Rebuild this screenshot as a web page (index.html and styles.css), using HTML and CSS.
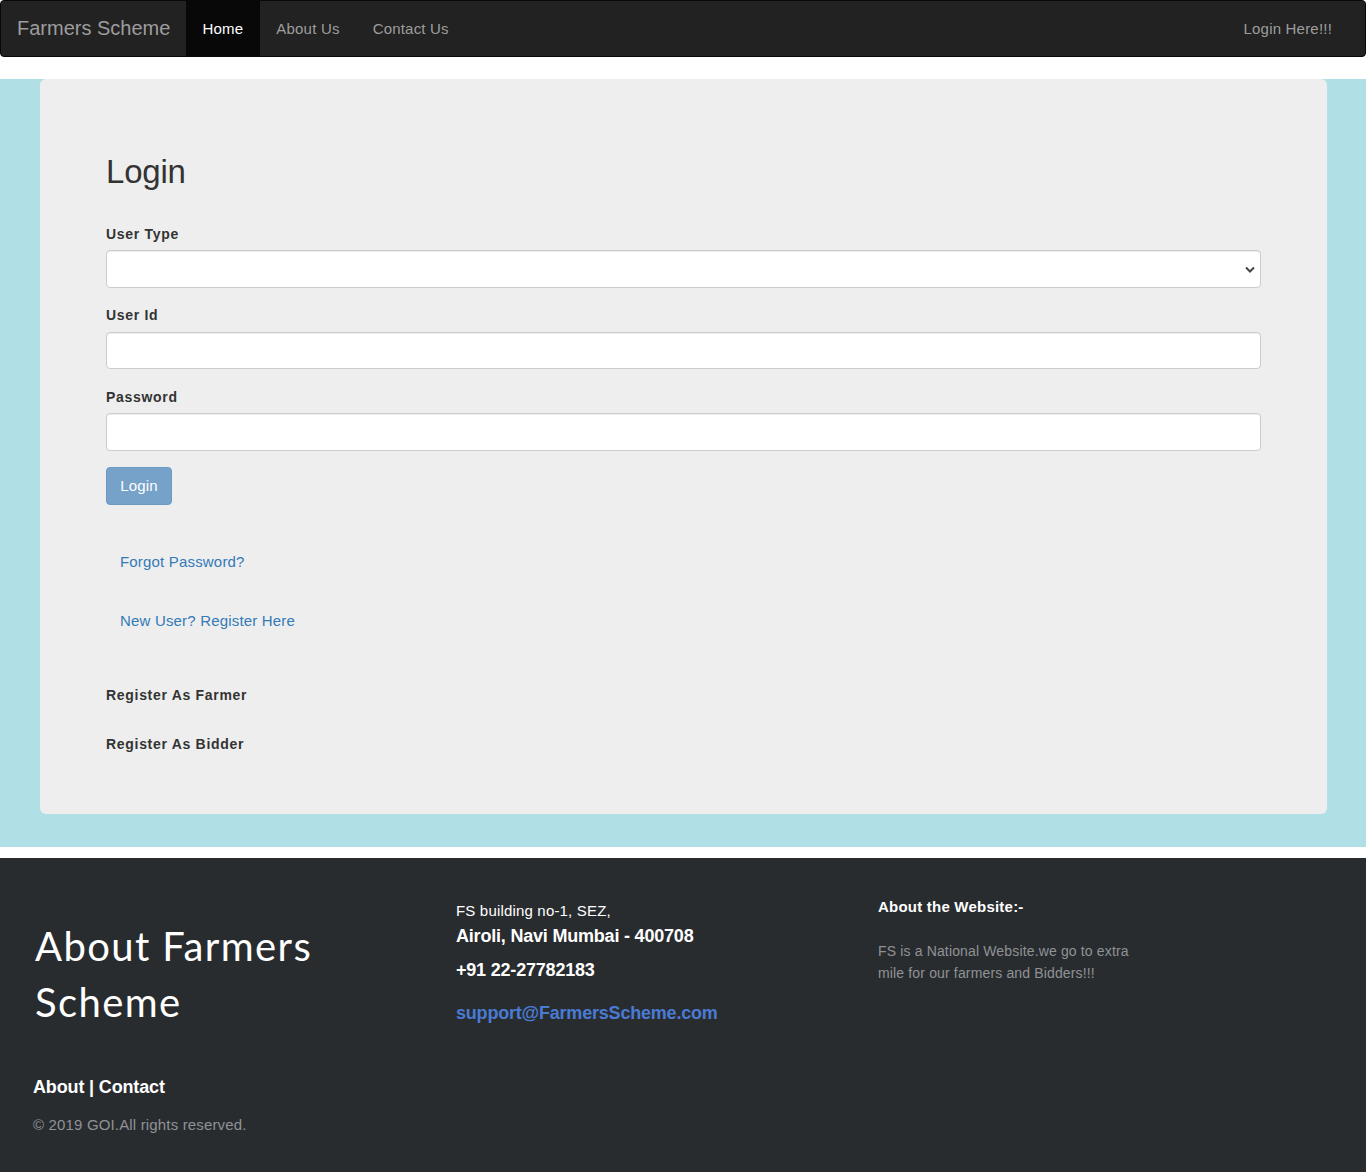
FILE: index.html
```html
<!DOCTYPE html>
<html lang="en">
<head>
<meta charset="utf-8">
<title>Farmers Scheme</title>
<link rel="stylesheet" href="styles.css">
</head>
<body>
<nav class="navbar">
  <a class="brand" href="#">Farmers Scheme</a>
  <ul class="nav">
    <li><a class="nav-link active" href="#">Home</a></li>
    <li><a class="nav-link" href="#">About Us</a></li>
    <li><a class="nav-link" href="#">Contact Us</a></li>
  </ul>
  <a class="nav-link login-link" href="#">Login Here!!!</a>
</nav>
<main class="band">
  <section class="card">
    <h2 class="title">Login</h2>
    <form class="form">
      <div class="group group-select">
        <label class="label">User Type</label>
        <div class="select-box">
          <svg class="chevron" width="10" height="7" viewBox="0 0 10 7"><path d="M1 1.5l4 4 4-4" fill="none" stroke="#444" stroke-width="2"/></svg>
        </div>
      </div>
      <div class="group">
        <label class="label label-mid">User Id</label>
        <input class="input" type="text">
      </div>
      <div class="group group-last">
        <label class="label">Password</label>
        <input class="input" type="password">
      </div>
      <button class="btn" type="button">Login</button>
    </form>
    <ul class="links">
      <li><a href="#">Forgot Password?</a></li>
      <li><a href="#">New User? Register Here</a></li>
    </ul>
    <div class="register">
      <p class="label">Register As Farmer</p>
      <p class="label">Register As Bidder</p>
    </div>
  </section>
</main>
<footer class="footer">
  <div class="col col-left">
    <h3 class="logo">About Farmers Scheme</h3>
    <p class="foot-links">About | Contact</p>
    <p class="copy">© 2019 GOI.All rights reserved.</p>
  </div>
  <div class="col col-mid">
    <p class="addr">FS building no-1, SEZ,</p>
    <p class="addr-strong">Airoli, Navi Mumbai - 400708</p>
    <p class="phone">+91 22-27782183</p>
    <p class="mail"><a href="#">support@FarmersScheme.com</a></p>
  </div>
  <div class="col col-right">
    <p class="about-head">About the Website:-</p>
    <p class="about-text">FS is a National Website.we go to extra mile for our farmers and Bidders!!!</p>
  </div>
</footer>
</body>
</html>
```
FILE: styles.css
```css
* { box-sizing: border-box; }
body {
  margin: 0;
  font-family: "Liberation Sans", Arial, sans-serif;
  font-size: 14px;
  line-height: 20px;
  color: #333;
  background: #fff;
}
a { text-decoration: none; }
ul { list-style: none; margin: 0; padding: 0; }
p { margin: 0; }

.navbar {
  display: flex;
  height: 57px;
  margin-bottom: 22px;
  background: #222;
  border: 1px solid #080808;
  border-radius: 4px;
}
.brand {
  padding: 0 16px;
  line-height: 55px;
  font-size: 20px;
  color: #9d9d9d;
  width: 185px;
  white-space: nowrap;
}
.nav { display: flex; }
.nav-link {
  display: block;
  padding: 0 16.5px;
  line-height: 55px;
  font-size: 15px;
  letter-spacing: .2px;
  color: #9d9d9d;
}
.nav-link.active { background: #080808; color: #fff; }
.login-link { margin-left: auto; padding-right: 17px; margin-right: 16px; }

.band {
  background: #b0e0e6;
  padding: 0 39px 33px 40px;
}
.card {
  height: 735px;
  padding: 73px 66px 0;
  background: #eee;
  border-radius: 6px;
}
.title {
  margin: 0 0 32px;
  font-size: 33px;
  line-height: 40px;
  letter-spacing: -.2px;
  font-weight: 400;
}
.label {
  display: block;
  margin: 0 0 6px;
  font-size: 14px;
  font-weight: 700;
  letter-spacing: .7px;
  line-height: 20px;
}
.label-mid { margin-bottom: 6.5px; }
.group { margin-bottom: 18px; }
.group-select { margin-bottom: 17px; }
.group-last { margin-bottom: 16.5px; }
.select-box, .input {
  display: block;
  width: 100%;
  height: 38px;
  background: #fff;
  border: 1px solid #ccc;
  border-radius: 4px;
  box-shadow: inset 0 1px 1px rgba(0,0,0,.075);
}
.select-box { display: flex; align-items: center; justify-content: flex-end; padding-right: 5px; }
.input { height: 37.5px; }
.btn {
  display: block;
  width: 66px;
  height: 38px;
  padding: 0 0 2px;
  font: 15px "Liberation Sans", Arial, sans-serif;
  letter-spacing: .2px;
  color: #fff;
  background: #76a2ca;
  border: 1px solid #6b9bc5;
  border-radius: 4px;
}
.links { margin-top: 37px; padding-left: 14px; }
.links li { height: 59px; line-height: 40px; font-size: 15px; letter-spacing: .18px; }
.links a { color: #337ab7; }
.register { margin-top: 25px; }
.register .label { margin-bottom: 29px; }

.footer {
  display: flex;
  height: 314px;
  margin-top: 11px;
  background: #292c2f;
  color: #fff;
}
.col-left { width: 423px; padding: 60px 0 0 33px; }
.col-mid { width: 422px; padding: 43px 0 0 33px; }
.col-right { width: 293px; padding: 39px 0 0 33px; }
.logo {
  margin: 0 0 44px 2px;
  font-family: "Comic Sans MS", Lato, sans-serif;
  font-size: 40px;
  letter-spacing: 1.4px;
  line-height: 56px;
  font-weight: 400;
  width: 340px;
}
.foot-links { font-size: 18px; font-weight: 700; line-height: 26px; letter-spacing: -.15px; }
.copy { margin-top: 15px; font-size: 15px; letter-spacing: .16px; color: #8f9296; }
.addr { font-size: 15px; line-height: 20px; letter-spacing: .18px; }
.addr-strong { margin-top: 2px; font-size: 18px; font-weight: 700; line-height: 26px; letter-spacing: -.2px; }
.phone { margin-top: 8px; font-size: 18px; font-weight: 700; line-height: 26px; letter-spacing: -.2px; }
.mail { margin-top: 17px; font-size: 18px; font-weight: 700; line-height: 26px; letter-spacing: -.2px; }
.mail a { color: #4a7bd4; }
.about-head { font-size: 15px; font-weight: 700; line-height: 20px; letter-spacing: .22px; }
.about-text { margin-top: 23px; font-size: 14px; line-height: 22px; letter-spacing: .15px; color: #8f9296; width: 260px; }
```
